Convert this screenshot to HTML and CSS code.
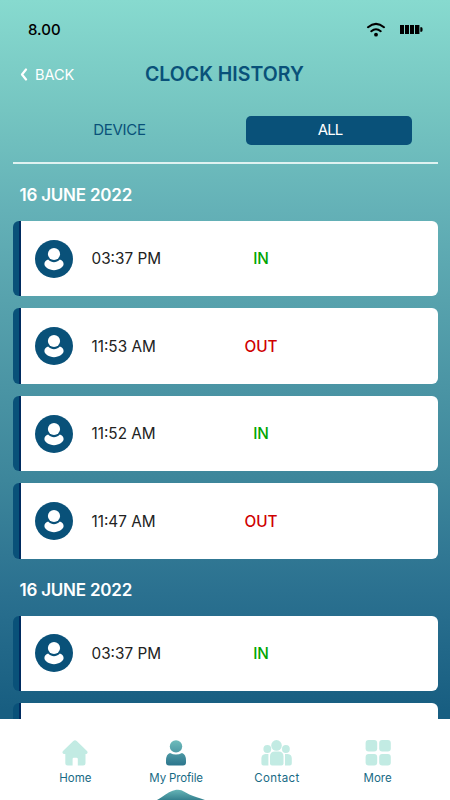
FILE: index.html
```html
<!DOCTYPE html>
<html lang="en">
<head>
    <meta charset="UTF-8">
    <meta name="viewport" content="width=device-width, initial-scale=1.0">
    <title>Clock History</title>
    <link rel="stylesheet" href="styles.css">
</head>
<body>
    <!-- Shared user icon -->
    <svg class="sprite" aria-hidden="true">
        <symbol id="avatar" viewBox="0 0 38 38">
            <circle cx="19" cy="19" r="19" fill="#095179"/>
            <circle cx="19" cy="14" r="6.1" fill="#fff"/>
            <path d="M13.1 19.6C15 21.5 17 22.3 19 22.3s4-.8 5.9-2.7c2.3.9 3.7 2.5 3.7 4.5 0 3.1-4.7 6.1-9.6 6.1s-9.6-3-9.6-6.1c0-2 1.4-3.6 3.7-4.5z" fill="#fff"/>
        </symbol>
    </svg>

    <div class="app">
        <div class="status-bar">
            <span class="time">8.00</span>
            <svg class="wifi" width="20" height="16" viewBox="0 0 20 16">
                <path d="M2 5.2Q10 -1.3 18 5.2M5.3 9.2Q10 5.3 14.7 9.2" fill="none" stroke="#000" stroke-width="2.1" stroke-linecap="round"/>
                <circle cx="10" cy="12.7" r="1.9"/>
            </svg>
            <svg class="battery" width="23" height="9" viewBox="0 0 23 9">
                <path d="M0 0h4v9H0zM5 0h4v9H5zM10 0h4v9h-4zM15 0h4.4v9H15zM20.3 2.2h1c.9 0 1.3.6 1.3 2.3s-.4 2.3-1.3 2.3h-1z"/>
            </svg>
        </div>

        <div class="header">
            <div class="back">
                <svg width="8" height="13" viewBox="0 0 8 13">
                    <path d="M6 1.5L2 6.5l4 5" fill="none" stroke="#fff" stroke-width="2.2" stroke-linecap="round" stroke-linejoin="round"/>
                </svg>
                <span>BACK</span>
            </div>
            <h1>CLOCK HISTORY</h1>
        </div>

        <div class="tabs">
            <div class="tab">DEVICE</div>
            <div class="tab active">ALL</div>
        </div>

        <div class="history">
            <h2>16 JUNE 2022</h2>
            <div class="card">
                <svg class="avatar"><use href="#avatar"/></svg>
                <span class="clock">03:37 PM</span>
                <span class="state in">IN</span>
            </div>
            <div class="card">
                <svg class="avatar"><use href="#avatar"/></svg>
                <span class="clock">11:53 AM</span>
                <span class="state out">OUT</span>
            </div>
            <div class="card">
                <svg class="avatar"><use href="#avatar"/></svg>
                <span class="clock">11:52 AM</span>
                <span class="state in">IN</span>
            </div>
            <div class="card">
                <svg class="avatar"><use href="#avatar"/></svg>
                <span class="clock">11:47 AM</span>
                <span class="state out">OUT</span>
            </div>
            <h2>16 JUNE 2022</h2>
            <div class="card">
                <svg class="avatar"><use href="#avatar"/></svg>
                <span class="clock">03:37 PM</span>
                <span class="state in">IN</span>
            </div>
            <div class="card"></div>
        </div>

        <div class="nav">
            <div class="nav-item">
                <svg width="26" height="26" viewBox="0 0 26 26" fill="#c2ebe3">
                    <path d="M11.3 1.1Q13 -.4 14.7 1.1L25 11.1Q26.4 13.1 24.5 13.9H23.5V23Q23.5 25.5 21 25.5H15.8V19Q15.8 17.7 14.6 17.7H11.8Q10.6 17.7 10.6 19V25.5H5.8Q3.3 25.5 3.3 23V13.9H1.7Q-.4 13.1 1 11.1Z"/>
                </svg>
                <span>Home</span>
            </div>
            <div class="nav-item">
                <svg width="26" height="26" viewBox="0 0 26 26">
                    <defs>
                        <linearGradient id="profile" x1="0" y1="0" x2="0" y2="26" gradientUnits="userSpaceOnUse">
                            <stop offset="0" stop-color="#6fbdbc"/>
                            <stop offset="1" stop-color="#2b748c"/>
                        </linearGradient>
                    </defs>
                    <g fill="url(#profile)">
                        <circle cx="13" cy="6.4" r="6.2"/>
                        <path d="M7 13Q10 14.6 13 14.6T19 13Q23 14.4 23 20.5V22.5Q23 25.5 20 25.5H6Q3 25.5 3 22.5V20.5Q3 14.4 7 13Z"/>
                    </g>
                </svg>
                <span class="profile">My Profile</span>
            </div>
            <div class="nav-item">
                <svg width="31" height="26" viewBox="0 0 31 26" fill="#c2ebe3">
                    <circle cx="15.5" cy="5.4" r="5.3"/>
                    <circle cx="6.3" cy="9" r="3.9"/>
                    <circle cx="24.9" cy="9" r="3.9"/>
                    <path d="M9 16.4Q9 11.5 14 11.5H17.5Q22.5 11.5 22.5 16.4V23.5Q22.5 25.5 20.5 25.5H11Q9 25.5 9 23.5Z"/>
                    <path d="M7.4 14V25.5H2.4Q.4 25.5 .4 23.5V18.5Q.4 14.4 4.5 14ZM24 14V25.5H28.8Q30.8 25.5 30.8 23.5V18.5Q30.8 14.4 26.8 14Z"/>
                </svg>
                <span class="contact">Contact</span>
            </div>
            <div class="nav-item">
                <svg width="26" height="26" viewBox="0 0 26 26" fill="#c2ebe3">
                    <rect x=".6" y="0" width="11.6" height="11.6" rx="3"/>
                    <rect x="14.2" y="0" width="11.6" height="11.6" rx="3"/>
                    <rect x=".6" y="13.9" width="11.6" height="11.6" rx="3"/>
                    <rect x="14.2" y="13.9" width="11.6" height="11.6" rx="3"/>
                </svg>
                <span>More</span>
            </div>
            <!-- Active tab wave -->
            <svg class="wave" width="50" height="11" viewBox="0 0 50 11">
                <defs>
                    <linearGradient id="wave" x1="0" y1="0" x2="0" y2="1">
                        <stop offset="0" stop-color="#65b4b6"/>
                        <stop offset="1" stop-color="#35818f"/>
                    </linearGradient>
                </defs>
                <path d="M0 11Q2.5 9.6 6 7.2C12 3 16 .8 21 .8S29 4.2 33 5.8C37 7.5 42 8.8 48 11Z" fill="url(#wave)"/>
            </svg>
        </div>
    </div>
</body>
</html>
```
FILE: styles.css
```css
/* Base styles */
body {
    margin: 0;
    padding: 0;
    font-family: 'Inter', sans-serif;
    color: #222;
}

h1, h2 {
    margin: 0;
    font-weight: 600;
}

svg {
    display: block;
    flex-shrink: 0;
}

.sprite {
    display: none;
}

.app {
    width: 450px;
    height: 800px;
    display: flex;
    flex-direction: column;
    overflow: hidden;
    background: linear-gradient(#87dacf 0, #75c5c1 110px, #64b1b7 210px, #57a2ad 300px, #3d869b 480px, #2b7190 590px, #185e81 710px);
}

/* Status bar */
.status-bar {
    height: 59px;
    display: flex;
    align-items: center;
    padding: 0 27px 0 28px;
    box-sizing: border-box;
    flex-shrink: 0;
}

.time {
    flex: 1;
    color: #000;
    font-size: 15px;
    font-weight: 500;
}

.battery {
    margin-left: 14px;
}

/* Header */
.header {
    height: 30px;
    display: flex;
    align-items: center;
    padding-left: 20px;
    flex-shrink: 0;
}

.back {
    width: 125px;
    display: flex;
    align-items: center;
    gap: 7px;
    color: #fff;
    font-size: 14.5px;
}

h1 {
    color: #095179;
    font-size: 19.5px;
    white-space: nowrap;
}

/* Tabs */
.tabs {
    display: flex;
    height: 46px;
    margin: 27px 12.5px 0;
    padding: 0 25px 0 24px;
    border-bottom: 2px solid #dff2f1;
    gap: 43px;
    flex-shrink: 0;
}

.tab {
    width: 166px;
    height: 29px;
    line-height: 28px;
    border-radius: 5px;
    text-align: center;
    font-size: 15px;
    letter-spacing: -0.3px;
    color: #095179;
}

.tab.active {
    background: #095179;
    color: #fff;
    letter-spacing: -1px;
    text-indent: 3px;
}

/* History list */
.history {
    flex: 1;
    min-height: 0;
    overflow: hidden;
    padding: 0 12.5px;
}

h2 {
    height: 57px;
    line-height: 62px;
    padding-left: 7px;
    color: #fff;
    font-size: 17px;
    letter-spacing: -0.22px;
}

.card {
    height: 75.2px;
    margin-bottom: 12.3px;
    box-sizing: border-box;
    display: flex;
    align-items: center;
    padding-left: 22.5px;
    border-radius: 6px;
    background: linear-gradient(90deg, #095179 6.3px, #002b60 6.3px, #002b60 7.5px, #fff 7.5px);
}

.card + h2 {
    margin-top: -12.3px;
}

.avatar {
    width: 38px;
    height: 38px;
}

.clock {
    width: 120px;
    margin-left: 18.5px;
    font-size: 15.3px;
}

.state {
    width: 99px;
    text-align: center;
    font-size: 15.3px;
    font-weight: 500;
}

.in {
    color: #00a500;
}

.out {
    color: #cf0000;
}

/* Bottom navigation */
.nav {
    position: relative;
    height: 81.5px;
    display: flex;
    padding: 0 22px 0 25px;
    box-sizing: border-box;
    background: #fff;
    flex-shrink: 0;
}

.nav-item {
    flex: 1;
    padding-top: 21px;
    display: flex;
    flex-direction: column;
    align-items: center;
    gap: 4px;
    color: #186a85;
    font-size: 11.5px;
    line-height: 16px;
}

.profile {
    letter-spacing: -0.15px;
}

.contact {
    letter-spacing: 0.4px;
}

.wave {
    position: absolute;
    left: 157px;
    bottom: 0;
}
```
